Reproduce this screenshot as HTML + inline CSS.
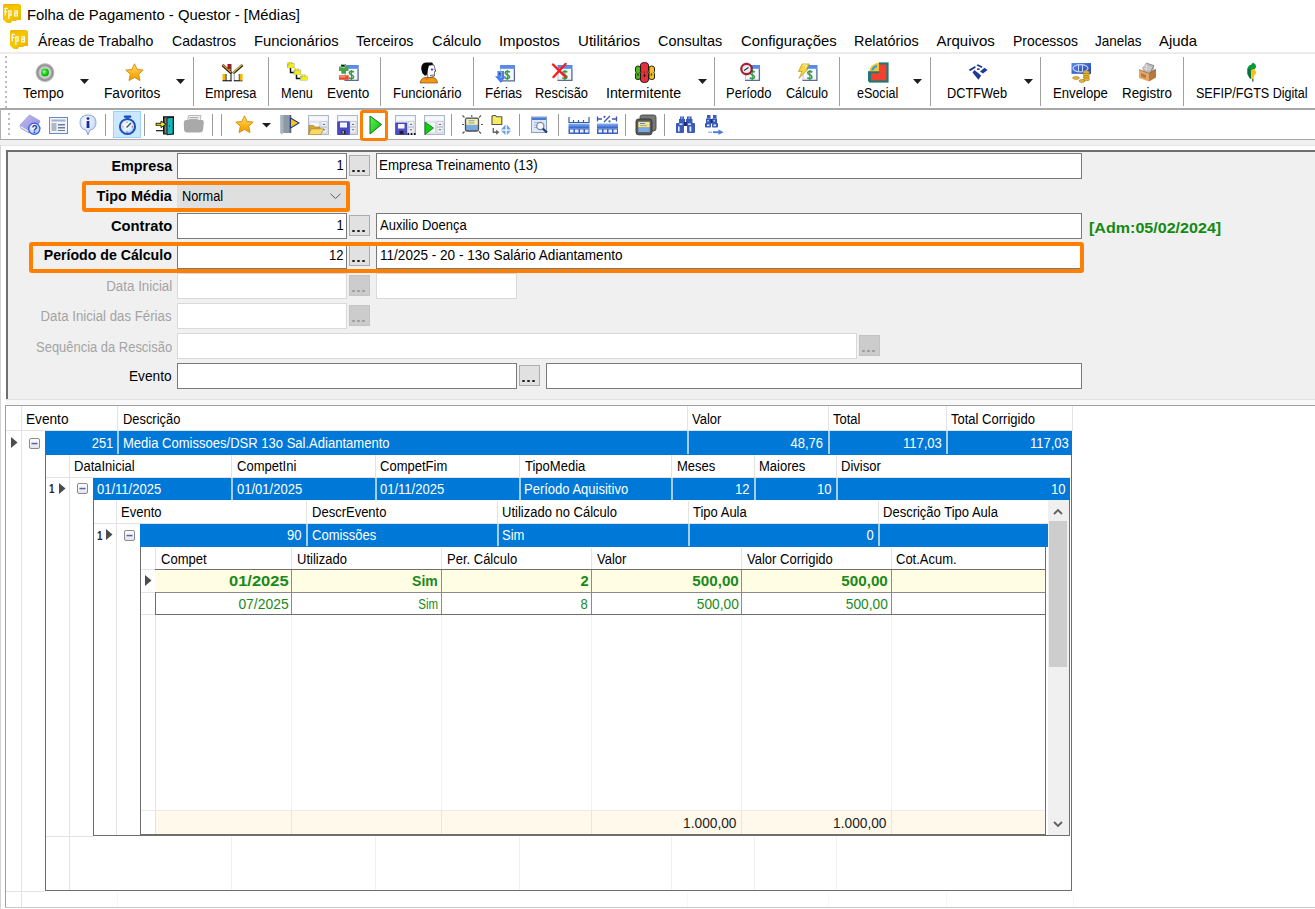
<!DOCTYPE html><html><head><meta charset="utf-8"><style>
html,body{margin:0;padding:0}
body{width:1315px;height:909px;overflow:hidden;position:relative;background:#fff;font-family:"Liberation Sans",sans-serif}
body>div{position:absolute}
.t{white-space:nowrap;line-height:1}
</style></head><body>

<svg style="position:absolute;left:0px;top:0px" width="24" height="24" viewBox="0 0 24 24"><defs><linearGradient id="fg0" x1="0" y1="0" x2="1" y2="1"><stop offset="0" stop-color="#f2b800"/><stop offset="0.5" stop-color="#f4c800"/><stop offset="1" stop-color="#eab000"/></linearGradient></defs><path d="M4 4 L18 4 L21 5 L21 20 L17 20 L16 21 L12 21 L11 23 L7 23 L3 19.5 L3 5Z" fill="url(#fg0)"/><path d="M4 4 L18 4 L21 5 L5 5.5Z" fill="#f0a800" opacity="0.6"/><g fill="#fff8e0"><rect x="4.6" y="7.8" width="1.4" height="7.7"/><rect x="4.6" y="7.8" width="3.4" height="1.3"/><rect x="4.6" y="11" width="2.8" height="1.2"/><rect x="8.2" y="10.2" width="1.3" height="8.8"/></g><path d="M8.8 10.8 L11 10.8 L11 15.2 L8.8 15.2 M14.2 10.8 L17.4 10.8 L17.4 15.8 L14.7 15.8 L14.7 13 L17.4 13" stroke="#fff8e0" stroke-width="1.3" fill="none"/></svg>
<div class="t" style="left:27.00px;top:6.90px;font-size:15px;color:#000;transform:scaleX(0.9890);transform-origin:left top;">Folha de Pagamento - Questor - [Médias]</div>
<svg style="position:absolute;left:7px;top:26px" width="24" height="24" viewBox="0 0 24 24"><defs><linearGradient id="fg7" x1="0" y1="0" x2="1" y2="1"><stop offset="0" stop-color="#f2b800"/><stop offset="0.5" stop-color="#f4c800"/><stop offset="1" stop-color="#eab000"/></linearGradient></defs><path d="M4 4 L18 4 L21 5 L21 20 L17 20 L16 21 L12 21 L11 23 L7 23 L3 19.5 L3 5Z" fill="url(#fg7)"/><path d="M4 4 L18 4 L21 5 L5 5.5Z" fill="#f0a800" opacity="0.6"/><g fill="#fff8e0"><rect x="4.6" y="7.8" width="1.4" height="7.7"/><rect x="4.6" y="7.8" width="3.4" height="1.3"/><rect x="4.6" y="11" width="2.8" height="1.2"/><rect x="8.2" y="10.2" width="1.3" height="8.8"/></g><path d="M8.8 10.8 L11 10.8 L11 15.2 L8.8 15.2 M14.2 10.8 L17.4 10.8 L17.4 15.8 L14.7 15.8 L14.7 13 L17.4 13" stroke="#fff8e0" stroke-width="1.3" fill="none"/></svg>
<div class="t" style="left:37.60px;top:33.30px;font-size:15px;color:#000;transform:scaleX(0.9413);transform-origin:left top;">Áreas de Trabalho</div>
<div class="t" style="left:171.90px;top:33.30px;font-size:15px;color:#000;transform:scaleX(0.9360);transform-origin:left top;">Cadastros</div>
<div class="t" style="left:254.00px;top:33.30px;font-size:15px;color:#000;transform:scaleX(0.9852);transform-origin:left top;">Funcionários</div>
<div class="t" style="left:356.20px;top:33.30px;font-size:15px;color:#000;transform:scaleX(0.9432);transform-origin:left top;">Terceiros</div>
<div class="t" style="left:431.70px;top:33.30px;font-size:15px;color:#000;transform:scaleX(0.9817);transform-origin:left top;">Cálculo</div>
<div class="t" style="left:498.90px;top:33.30px;font-size:15px;color:#000;">Impostos</div>
<div class="t" style="left:578.00px;top:33.30px;font-size:15px;color:#000;transform:scaleX(1.0053);transform-origin:left top;">Utilitários</div>
<div class="t" style="left:658.30px;top:33.30px;font-size:15px;color:#000;transform:scaleX(0.9610);transform-origin:left top;">Consultas</div>
<div class="t" style="left:740.50px;top:33.30px;font-size:15px;color:#000;transform:scaleX(0.9883);transform-origin:left top;">Configurações</div>
<div class="t" style="left:854.20px;top:33.30px;font-size:15px;color:#000;transform:scaleX(0.9581);transform-origin:left top;">Relatórios</div>
<div class="t" style="left:936.50px;top:33.30px;font-size:15px;color:#000;">Arquivos</div>
<div class="t" style="left:1012.60px;top:33.30px;font-size:15px;color:#000;transform:scaleX(0.9282);transform-origin:left top;">Processos</div>
<div class="t" style="left:1094.60px;top:33.30px;font-size:15px;color:#000;transform:scaleX(0.8974);transform-origin:left top;">Janelas</div>
<div class="t" style="left:1158.90px;top:33.30px;font-size:15px;color:#000;transform:scaleX(0.9932);transform-origin:left top;">Ajuda</div>
<div style="left:0px;top:52px;width:1315px;height:2px;background:#ececec;"></div>
<div style="left:5px;top:56px;width:2px;height:2px;background:#bdbdbd;"></div>
<div style="left:5px;top:61px;width:2px;height:2px;background:#bdbdbd;"></div>
<div style="left:5px;top:66px;width:2px;height:2px;background:#bdbdbd;"></div>
<div style="left:5px;top:71px;width:2px;height:2px;background:#bdbdbd;"></div>
<div style="left:5px;top:76px;width:2px;height:2px;background:#bdbdbd;"></div>
<div style="left:5px;top:81px;width:2px;height:2px;background:#bdbdbd;"></div>
<div style="left:5px;top:86px;width:2px;height:2px;background:#bdbdbd;"></div>
<div style="left:5px;top:91px;width:2px;height:2px;background:#bdbdbd;"></div>
<div style="left:5px;top:96px;width:2px;height:2px;background:#bdbdbd;"></div>
<div style="left:5px;top:101px;width:2px;height:2px;background:#bdbdbd;"></div>
<div style="left:5px;top:106px;width:2px;height:2px;background:#bdbdbd;"></div>
<div class="t" style="left:23.10px;top:85.95px;font-size:14px;color:#000;transform:scaleX(0.9690);transform-origin:left top;">Tempo</div>
<div class="t" style="left:104.00px;top:85.95px;font-size:14px;color:#000;transform:scaleX(0.9783);transform-origin:left top;">Favoritos</div>
<div class="t" style="left:205.20px;top:85.95px;font-size:14px;color:#000;transform:scaleX(0.9161);transform-origin:left top;">Empresa</div>
<div class="t" style="left:280.50px;top:85.95px;font-size:14px;color:#000;transform:scaleX(0.9114);transform-origin:left top;">Menu</div>
<div class="t" style="left:326.60px;top:85.95px;font-size:14px;color:#000;transform:scaleX(0.9684);transform-origin:left top;">Evento</div>
<div class="t" style="left:393.00px;top:85.95px;font-size:14px;color:#000;transform:scaleX(0.9356);transform-origin:left top;">Funcionário</div>
<div class="t" style="left:484.70px;top:85.95px;font-size:14px;color:#000;transform:scaleX(0.9518);transform-origin:left top;">Férias</div>
<div class="t" style="left:535.00px;top:85.95px;font-size:14px;color:#000;transform:scaleX(0.9207);transform-origin:left top;">Rescisão</div>
<div class="t" style="left:606.00px;top:85.95px;font-size:14px;color:#000;transform:scaleX(1.0150);transform-origin:left top;">Intermitente</div>
<div class="t" style="left:726.00px;top:85.95px;font-size:14px;color:#000;transform:scaleX(0.9283);transform-origin:left top;">Período</div>
<div class="t" style="left:785.50px;top:85.95px;font-size:14px;color:#000;transform:scaleX(0.9020);transform-origin:left top;">Cálculo</div>
<div class="t" style="left:856.80px;top:85.95px;font-size:14px;color:#000;transform:scaleX(0.8975);transform-origin:left top;">eSocial</div>
<div class="t" style="left:947.30px;top:85.95px;font-size:14px;color:#000;transform:scaleX(0.9112);transform-origin:left top;">DCTFWeb</div>
<div class="t" style="left:1052.80px;top:85.95px;font-size:14px;color:#000;transform:scaleX(0.9390);transform-origin:left top;">Envelope</div>
<div class="t" style="left:1121.50px;top:85.95px;font-size:14px;color:#000;transform:scaleX(0.9557);transform-origin:left top;">Registro</div>
<div class="t" style="left:1195.80px;top:85.95px;font-size:14px;color:#000;transform:scaleX(0.8966);transform-origin:left top;">SEFIP/FGTS Digital</div>
<div style="left:193px;top:57px;width:1px;height:49px;background:#a0a0a0;"></div>
<div style="left:268px;top:57px;width:1px;height:49px;background:#a0a0a0;"></div>
<div style="left:380px;top:57px;width:1px;height:49px;background:#a0a0a0;"></div>
<div style="left:473px;top:57px;width:1px;height:49px;background:#a0a0a0;"></div>
<div style="left:714px;top:57px;width:1px;height:49px;background:#a0a0a0;"></div>
<div style="left:839px;top:57px;width:1px;height:49px;background:#a0a0a0;"></div>
<div style="left:930px;top:57px;width:1px;height:49px;background:#a0a0a0;"></div>
<div style="left:1040px;top:57px;width:1px;height:49px;background:#a0a0a0;"></div>
<div style="left:1183px;top:57px;width:1px;height:49px;background:#a0a0a0;"></div>
<svg style="position:absolute;left:80px;top:79px" width="9" height="5" viewBox="0 0 9 5"><path d="M0 0 L9 0 L4.5 5Z" fill="#1e1e1e"/></svg>
<svg style="position:absolute;left:176px;top:79px" width="9" height="5" viewBox="0 0 9 5"><path d="M0 0 L9 0 L4.5 5Z" fill="#1e1e1e"/></svg>
<svg style="position:absolute;left:698px;top:79px" width="9" height="5" viewBox="0 0 9 5"><path d="M0 0 L9 0 L4.5 5Z" fill="#1e1e1e"/></svg>
<svg style="position:absolute;left:913px;top:79px" width="9" height="5" viewBox="0 0 9 5"><path d="M0 0 L9 0 L4.5 5Z" fill="#1e1e1e"/></svg>
<svg style="position:absolute;left:1024px;top:79px" width="9" height="5" viewBox="0 0 9 5"><path d="M0 0 L9 0 L4.5 5Z" fill="#1e1e1e"/></svg>
<div style="left:0px;top:108px;width:1315px;height:2px;background:#a7a7a7;"></div>
<svg style="position:absolute;left:35px;top:63px" width="20" height="20" viewBox="0 0 20 20"><defs><radialGradient id="tg"><stop offset="0.3" stop-color="#f0f0f0"/><stop offset="0.55" stop-color="#c8c8c8"/><stop offset="0.78" stop-color="#8c8c8c"/><stop offset="0.92" stop-color="#c4c4c4"/><stop offset="1" stop-color="#f8f8f8"/></radialGradient><radialGradient id="tg2" cx="0.4" cy="0.4"><stop offset="0" stop-color="#b0ffb0"/><stop offset="0.5" stop-color="#30e030"/><stop offset="1" stop-color="#10b010"/></radialGradient></defs><circle cx="10" cy="9.6" r="9.8" fill="url(#tg)"/><circle cx="10" cy="9.6" r="4" fill="url(#tg2)"/></svg>
<svg style="position:absolute;left:125px;top:63px" width="19" height="19" viewBox="0 0 19 19"><defs><linearGradient id="sg" x1="0" y1="0" x2="0" y2="1"><stop offset="0" stop-color="#ffe27a"/><stop offset="0.6" stop-color="#f9b21a"/><stop offset="1" stop-color="#f39a00"/></linearGradient></defs><path transform="scale(1.000)" d="M9.5 0.8 L12.1 6.4 L18.2 7.1 L13.7 11.2 L15 17.6 L9.5 14.5 L4 17.6 L5.3 11.2 L0.8 7.1 L6.9 6.4Z" fill="url(#sg)" stroke="#d48a00" stroke-width="0.9" stroke-linejoin="round"/></svg>
<svg style="position:absolute;left:218px;top:60px" width="30" height="25" viewBox="0 0 30 25"><path d="M4.5 5 L13.5 13.2" stroke="#111" stroke-width="2.8"/><path d="M4.5 4.6 L13.2 12.6" stroke="#d8a820" stroke-width="1.3"/><path d="M24.5 5 L15 13.4" stroke="#111" stroke-width="2.6"/><path d="M24.3 4.6 L14.8 12.9" stroke="#e0b840" stroke-width="1.3"/><rect x="9.5" y="4" width="3" height="5" fill="#d00018"/><rect x="12.4" y="4" width="1" height="7" fill="#111"/><rect x="4.5" y="14" width="3.2" height="6.5" fill="#f4b800"/><rect x="7.6" y="14" width="0.9" height="7" fill="#111"/><rect x="4.5" y="20.2" width="9" height="1.1" fill="#111"/><rect x="12.5" y="13" width="1" height="8.3" fill="#111"/><rect x="15.8" y="13" width="0.9" height="8" fill="#8aa0a0"/><rect x="15.8" y="20.2" width="8.7" height="1.1" fill="#111"/><rect x="21.4" y="14" width="3.2" height="6.5" fill="#f4b800"/><rect x="20.8" y="14" width="0.7" height="7" fill="#111"/></svg>
<svg style="position:absolute;left:284px;top:60px" width="28" height="24" viewBox="0 0 28 24"><path d="M6.5 8 L6.5 12.5 L10 12.5 M12.5 14.5 L12.5 18.5 L16.5 18.5" stroke="#111" stroke-width="1.5" fill="none"/><path d="M3 4.5 L4 2 L5.5 2 L6 3 L7 2 L8 2 L8.5 3.2 L10.5 3.2 L10.5 8 L3 8Z" fill="#a8a8b0"/><path d="M3.2 8 L5 4.2 L10 3.8 L10 7.6Z" fill="#f2f200"/><path d="M9.5 11.0 L10.5 8.5 L12.0 8.5 L12.5 9.5 L13.5 8.5 L14.5 8.5 L15.0 9.7 L17.0 9.7 L17.0 14.5 L9.5 14.5Z" fill="#a8a8b0"/><path d="M9.7 14.5 L11.5 10.7 L16.5 10.3 L16.5 14.1Z" fill="#f2f200"/><path d="M16 17.0 L17 14.5 L18.5 14.5 L19 15.5 L20 14.5 L21 14.5 L21.5 15.7 L23.5 15.7 L23.5 20.5 L16 20.5Z" fill="#a8a8b0"/><path d="M16.2 20.5 L18 16.7 L23 16.3 L23 20.1Z" fill="#f2f200"/><circle cx="4" cy="3" r="1" fill="#f0f000"/><circle cx="6.5" cy="3" r="1" fill="#f0f000"/><circle cx="10.5" cy="9.5" r="1" fill="#f0f000"/><circle cx="13" cy="9.5" r="1" fill="#f0f000"/><circle cx="17" cy="15.5" r="1" fill="#f0f000"/><circle cx="19.5" cy="15.5" r="1" fill="#f0f000"/></svg>
<svg style="position:absolute;left:336px;top:60px" width="26" height="24" viewBox="0 0 26 24"><rect x="8.5" y="5" width="14.2" height="16" fill="#f4f7fc"/><rect x="8.5" y="5" width="14.2" height="3.8" fill="#5a8ae6"/><path d="M22.099999999999998 8.8 L22.099999999999998 20.4 L8.5 20.4" stroke="#5a6a92" stroke-width="1.3" fill="none"/><path d="M9.0 8.8 L9.0 20" stroke="#b8c8e4" stroke-width="1" fill="none"/><g transform="translate(12.399999999999999,10) scale(0.95)"><path d="M5.6 2.4 C5 1.2 1.2 0.9 1 3 C0.8 5 5.6 4.8 5.5 7.3 C5.4 9.6 1.3 9.4 0.6 8.1" stroke="#3a9a4a" stroke-width="1.7" fill="none"/><path d="M3.2 0 L3.2 10.5" stroke="#3a9a4a" stroke-width="1.1"/></g><path d="M5.3 4 L10 4 L10 6.5 L12.5 6.5 L12.5 11 L10 11 L10 13.7 L5.3 13.7 L5.3 11 L3 11 L3 6.5 L5.3 6.5Z" fill="#4aa04a"/><path d="M5.3 4.5 L9 4.5 L9 7.5 L5.3 7.5 M3.5 7 L8 7" stroke="#8ad08a" stroke-width="1"/><rect x="3" y="15.3" width="9.7" height="4.5" fill="#e84a2a"/><rect x="3.5" y="16" width="6" height="1.5" fill="#ff8a7a"/></svg>
<svg style="position:absolute;left:416px;top:60px" width="26" height="26" viewBox="0 0 26 26"><path d="M4 23 Q5 18 9 17.5 L17 17.5 Q21 18 21.5 23Z" fill="#f59a10" stroke="#5a3a10" stroke-width="0.6"/><path d="M9 17.5 L12 19.5 L10 20Z" fill="#ff5a00"/><path d="M10 5 L18 5 L19.5 10.5 L18.5 12 L18.5 16 L16 17 L12 18 Z" fill="#fbfbfb" stroke="#222" stroke-width="0.6"/><path d="M5.2 9 Q5 3 10 2.5 L16 2.5 L17.5 4.5 L13 5.5 L12 9 L11.5 12 L10.5 15.5 L8.5 15.5 Q5.5 13 5.2 9Z" fill="#080808"/><ellipse cx="16" cy="9.5" rx="1.3" ry="1" fill="#3a3ae8"/><path d="M18.5 9.5 L19.8 10.8 L18.6 11.5" stroke="#222" stroke-width="0.8" fill="none"/><path d="M14 15.5 L18 15" stroke="#444" stroke-width="0.8"/></svg>
<svg style="position:absolute;left:492px;top:60px" width="26" height="26" viewBox="0 0 26 26"><rect x="8" y="5" width="15" height="16.5" fill="#f4f7fc"/><rect x="8" y="5" width="15" height="3.8" fill="#5a8ae6"/><path d="M22.4 8.8 L22.4 20.9 L8 20.9" stroke="#5a6a92" stroke-width="1.3" fill="none"/><path d="M8.5 8.8 L8.5 20.5" stroke="#b8c8e4" stroke-width="1" fill="none"/><g transform="translate(12.3,10) scale(0.95)"><path d="M5.6 2.4 C5 1.2 1.2 0.9 1 3 C0.8 5 5.6 4.8 5.5 7.3 C5.4 9.6 1.3 9.4 0.6 8.1" stroke="#3a9a4a" stroke-width="1.7" fill="none"/><path d="M3.2 0 L3.2 10.5" stroke="#3a9a4a" stroke-width="1.1"/></g><path d="M5.5 11 L12 11 L12 16.2 L14 16.2 L8.8 23 L3 16.2 L5.5 16.2Z" fill="#4a7ee8"/><path d="M7 12 L9 12 L9 18" stroke="#9ac0ff" stroke-width="1.2"/></svg>
<svg style="position:absolute;left:549px;top:60px" width="26" height="26" viewBox="0 0 26 26"><rect x="8.5" y="5" width="15" height="16" fill="#f4f7fc"/><rect x="8.5" y="5" width="15" height="3.8" fill="#5a8ae6"/><path d="M22.9 8.8 L22.9 20.4 L8.5 20.4" stroke="#5a6a92" stroke-width="1.3" fill="none"/><path d="M9.0 8.8 L9.0 20" stroke="#b8c8e4" stroke-width="1" fill="none"/><g transform="translate(12.8,10) scale(0.95)"><path d="M5.6 2.4 C5 1.2 1.2 0.9 1 3 C0.8 5 5.6 4.8 5.5 7.3 C5.4 9.6 1.3 9.4 0.6 8.1" stroke="#3a9a4a" stroke-width="1.7" fill="none"/><path d="M3.2 0 L3.2 10.5" stroke="#3a9a4a" stroke-width="1.1"/></g><path d="M4 4.5 L16.5 17 M16.5 4 L4.5 17" stroke="#ff1a1a" stroke-width="2.4" stroke-linecap="round"/></svg>
<svg style="position:absolute;left:631px;top:60px" width="26" height="26" viewBox="0 0 26 26"><path d="M4.5 8 Q4.5 6 7 6 Q9.5 6 9.5 8 L9.5 11.5 Q8.5 12.5 9.5 13.5 L9.5 18 Q9.5 19.5 7 19.5 Q4.5 19.5 4.5 18 L4.5 13.5 Q5.5 12.5 4.5 11.5Z" fill="#4ab81a" stroke="#111" stroke-width="0.9"/><path d="M18 8 Q18 6 20.5 6 Q23.5 6 23.5 8 L23.5 11.5 Q22.5 12.5 23.5 13.5 L23.5 18 Q23.5 19.5 20.5 19.5 Q18 19.5 18 18 L18 13.5 Q19 12.5 18 11.5Z" fill="#f0c020" stroke="#111" stroke-width="0.9"/><path d="M9.5 5 Q9.5 2.5 13.5 2.5 Q17.5 2.5 17.5 5 L17.5 10.5 Q16.5 12 17.5 13.5 L17.5 20 Q17.5 22.5 13.5 22.5 Q9.5 22.5 9.5 20 L9.5 13.5 Q10.5 12 9.5 10.5Z" fill="#e8303a" stroke="#111" stroke-width="0.9"/><ellipse cx="13.5" cy="15.5" rx="0.9" ry="1.6" fill="#111"/><ellipse cx="13.5" cy="12" rx="0.6" ry="0.6" fill="#111"/><ellipse cx="7" cy="14.5" rx="0.8" ry="1.2" fill="#173a0a"/><ellipse cx="20.5" cy="14.5" rx="0.8" ry="1.2" fill="#5a4010"/></svg>
<svg style="position:absolute;left:737px;top:59px" width="26" height="26" viewBox="0 0 26 26"><rect x="8" y="6" width="15" height="16" fill="#f4f7fc"/><rect x="8" y="6" width="15" height="3.8" fill="#5a8ae6"/><path d="M22.4 9.8 L22.4 21.4 L8 21.4" stroke="#5a6a92" stroke-width="1.3" fill="none"/><path d="M8.5 9.8 L8.5 21" stroke="#b8c8e4" stroke-width="1" fill="none"/><g transform="translate(12.3,11) scale(0.95)"><path d="M5.6 2.4 C5 1.2 1.2 0.9 1 3 C0.8 5 5.6 4.8 5.5 7.3 C5.4 9.6 1.3 9.4 0.6 8.1" stroke="#3a9a4a" stroke-width="1.7" fill="none"/><path d="M3.2 0 L3.2 10.5" stroke="#3a9a4a" stroke-width="1.1"/></g><circle cx="9.5" cy="10" r="5" fill="#e6ecfa" stroke="#c01828" stroke-width="1.8"/><circle cx="9.5" cy="10" r="6" fill="none" stroke="#300" stroke-width="0.5"/><path d="M7 11.5 L11.5 8.5" stroke="#333" stroke-width="1.1"/></svg>
<svg style="position:absolute;left:794px;top:59px" width="26" height="26" viewBox="0 0 26 26"><rect x="8.5" y="6" width="15" height="16" fill="#f4f7fc"/><rect x="8.5" y="6" width="15" height="3.8" fill="#5a8ae6"/><path d="M22.9 9.8 L22.9 21.4 L8.5 21.4" stroke="#5a6a92" stroke-width="1.3" fill="none"/><path d="M9.0 9.8 L9.0 21" stroke="#b8c8e4" stroke-width="1" fill="none"/><g transform="translate(12.8,11) scale(0.95)"><path d="M5.6 2.4 C5 1.2 1.2 0.9 1 3 C0.8 5 5.6 4.8 5.5 7.3 C5.4 9.6 1.3 9.4 0.6 8.1" stroke="#3a9a4a" stroke-width="1.7" fill="none"/><path d="M3.2 0 L3.2 10.5" stroke="#3a9a4a" stroke-width="1.1"/></g><path d="M8 5 L15.5 5 L12.5 10 L14 10 L5 19.5 L8 12.5 L4.5 12.5Z" fill="#f6d640" stroke="#c09010" stroke-width="0.7"/><path d="M8.5 6 L13 6 L10.5 10" stroke="#fff8b0" stroke-width="0.9" fill="none"/></svg>
<svg style="position:absolute;left:865px;top:59px" width="26" height="26" viewBox="0 0 26 26"><rect x="5" y="4.5" width="17.5" height="18" fill="#f2402e" stroke="#1f7878" stroke-width="2.2"/><path d="M3.5 3 L14 3 L14 13.5 L3.5 13.5Z" fill="#fff"/><path d="M14 3.5 L14 13.2 L4 13.2 Q5 5 14 3.5Z" fill="#f6c628"/><path d="M12 6 Q7 7 6.3 11.2 L8.5 11.2 Q9.5 8.5 12 8Z" fill="#2aa0ee"/><path d="M14 13.2 L4 13.2 L4 22.5" stroke="#1f7878" stroke-width="2" fill="none"/></svg>
<svg style="position:absolute;left:965px;top:59px" width="26" height="26" viewBox="0 0 26 26"><path d="M11.5 6.5 L12.8 5.2 L17.5 7.6 L16.6 8.9Z" fill="#1e3a98"/><path d="M4 10.6 L10 7 L10.9 8.6 L5 12.2Z" fill="#1e3a98"/><rect x="12" y="9.4" width="2.6" height="1.6" fill="#1e3a98"/><path d="M15 12.6 L19.5 8.8 L22.6 10.9 L18 14.6Z" fill="#1e3a98"/><path d="M7.5 13.6 L9.4 11 L16.2 16.4 L13.4 20.8Z" fill="#1e3a98"/></svg>
<svg style="position:absolute;left:1068px;top:59px" width="26" height="26" viewBox="0 0 26 26"><defs><linearGradient id="bn" x1="0" y1="0" x2="1" y2="1"><stop offset="0" stop-color="#5a8ae8"/><stop offset="1" stop-color="#2040b0"/></linearGradient></defs><rect x="3.5" y="4" width="19.5" height="10.8" fill="url(#bn)"/><ellipse cx="12.5" cy="9.3" rx="7.5" ry="3.6" fill="none" stroke="#d8e4ff" stroke-width="1.2" opacity="0.85"/><path d="M10.5 5.8 L10.5 12.5 M14.5 5.8 L14.5 12" stroke="#c8d8ff" stroke-width="1"/><g fill="#e8b838" stroke="#8a6010" stroke-width="0.5"><ellipse cx="18.3" cy="13.2" rx="3.2" ry="1.5"/><ellipse cx="18.3" cy="15.6" rx="3.2" ry="1.4"/><ellipse cx="18.3" cy="18" rx="3.2" ry="1.4"/><ellipse cx="18.5" cy="20.3" rx="3.2" ry="1.4"/><ellipse cx="8" cy="19" rx="3.4" ry="1.4"/><ellipse cx="14" cy="22" rx="3" ry="1.4"/></g></svg>
<svg style="position:absolute;left:1135px;top:59px" width="26" height="26" viewBox="0 0 26 26"><path d="M7 9 L11 4 L19 6.5 L18.5 14 L9 14Z" fill="#b8b8b8"/><path d="M9 6.5 L17 9 M8.5 9 L16 11 M12 4.5 L11 12" stroke="#e8e8e8" stroke-width="0.8"/><path d="M11 4 L19 6.5 L15 14" stroke="#777" stroke-width="0.7" fill="none"/><path d="M4 10.5 L14 14.5 L14 22.5 L4 19Z" fill="#e4a864"/><path d="M14 14.5 L21 10 L21 18.5 L14 22.5Z" fill="#b8783c"/><path d="M4 10.5 L14 14.5 L21 10" stroke="#8a5020" stroke-width="0.6" fill="none"/><path d="M6 14 L11 16 L11 19.5 L6 17.5Z" fill="#b87a40"/></svg>
<svg style="position:absolute;left:1239px;top:59px" width="26" height="26" viewBox="0 0 26 26"><path d="M14 3.5 L16.5 5.5 L17.2 8 L15.8 10 L12.5 11 L12 15.5 L12.5 19.5 L11 19.5 L8.5 15 L8.5 9 L10 6.5 L12 5.8Z" fill="#0a9a3a"/><path d="M8.5 9.5 L11.5 10.5 L12.2 19.5 L10.8 19.5 L8.5 15Z" fill="#0a6a4a"/><path d="M15.5 10 L16.5 12 L17.3 13.2 L16.5 15 L15 16.5 L14.5 20 L13 20 L12 15 L12.5 11Z" fill="#fcc200"/><rect x="13" y="20" width="1.6" height="2.6" fill="#3a8a6a"/></svg>
<div style="left:0px;top:109px;width:1px;height:31px;background:#b0b0b0;"></div>
<div style="left:8px;top:113px;width:2px;height:2px;background:#bdbdbd;"></div>
<div style="left:8px;top:118px;width:2px;height:2px;background:#bdbdbd;"></div>
<div style="left:8px;top:123px;width:2px;height:2px;background:#bdbdbd;"></div>
<div style="left:8px;top:128px;width:2px;height:2px;background:#bdbdbd;"></div>
<div style="left:8px;top:133px;width:2px;height:2px;background:#bdbdbd;"></div>
<div style="left:105px;top:114px;width:1px;height:22px;background:#9a9a9a;"></div>
<div style="left:144px;top:114px;width:1px;height:22px;background:#9a9a9a;"></div>
<div style="left:212px;top:114px;width:1px;height:22px;background:#9a9a9a;"></div>
<div style="left:221px;top:114px;width:1px;height:22px;background:#9a9a9a;"></div>
<div style="left:451px;top:114px;width:1px;height:22px;background:#9a9a9a;"></div>
<div style="left:519px;top:114px;width:1px;height:22px;background:#9a9a9a;"></div>
<div style="left:558px;top:114px;width:1px;height:22px;background:#9a9a9a;"></div>
<div style="left:625px;top:114px;width:1px;height:22px;background:#9a9a9a;"></div>
<div style="left:664px;top:114px;width:1px;height:22px;background:#9a9a9a;"></div>
<div style="left:0px;top:139px;width:1315px;height:1px;background:#a7a7a7;"></div>
<div style="left:0px;top:140px;width:1315px;height:5px;background:#f0f0f0;"></div>
<div style="left:0px;top:145px;width:1315px;height:1px;background:#e6e6e6;"></div>
<svg style="position:absolute;left:16px;top:111px" width="30" height="28" viewBox="0 0 30 28"><defs><linearGradient id="bk" x1="0" y1="0" x2="1" y2="1"><stop offset="0" stop-color="#c4c0f0"/><stop offset="1" stop-color="#8882d8"/></linearGradient><radialGradient id="qc" cx="0.4" cy="0.35"><stop offset="0" stop-color="#ffffff"/><stop offset="1" stop-color="#b8d0ff"/></radialGradient></defs><path d="M4 14 L13.5 4 L24 10 L23 12.5 L13 22 L4.5 17Z" fill="url(#bk)" stroke="#9a94dc" stroke-width="0.8"/><path d="M4.5 15.5 L12.5 20.5" stroke="#e8f0e0" stroke-width="1.4"/><circle cx="18.3" cy="17.8" r="5.6" fill="url(#qc)" stroke="#3060e0" stroke-width="1.3"/><text x="15.4" y="21.6" font-family="Liberation Sans" font-weight="bold" font-size="10" fill="#2a3a90">?</text></svg>
<svg style="position:absolute;left:49px;top:117px" width="19" height="17" viewBox="0 0 19 17"><rect x="0.5" y="0.5" width="18" height="16" fill="#f0f4fa" stroke="#6a8ac0" stroke-width="1"/><rect x="2.5" y="2.5" width="14" height="2" fill="#a0b0c8"/><rect x="2.5" y="6" width="5" height="8" fill="#b0b8c4"/><rect x="9" y="7" width="7" height="1.5" fill="#6a7aa0"/><rect x="9" y="10" width="7" height="1.5" fill="#6a7aa0"/><rect x="9" y="13" width="7" height="1" fill="#6a7aa0"/></svg>
<svg style="position:absolute;left:79px;top:114px" width="18" height="22" viewBox="0 0 18 22"><defs><radialGradient id="ib" cx="0.4" cy="0.35" r="0.7"><stop offset="0" stop-color="#ffffff"/><stop offset="1" stop-color="#b8d0f0"/></radialGradient></defs><path d="M9 1 Q17 1 17 8.5 Q17 15 11 16 L9 21 L7 16 Q1 15 1 8.5 Q1 1 9 1Z" fill="url(#ib)" stroke="#8aa8d8" stroke-width="1"/><circle cx="9" cy="4.6" r="1.4" fill="#1a2aa0"/><rect x="7.6" y="7" width="2.8" height="7" fill="#1a2aa0"/></svg>
<div style="left:113px;top:111px;width:28px;height:27px;background:#cce8ff;box-sizing:border-box;border:1px solid #99d1ff;"></div>
<svg style="position:absolute;left:110px;top:109px" width="100" height="30" viewBox="0 0 100 30"><defs><radialGradient id="sw" cx="0.45" cy="0.45"><stop offset="0" stop-color="#ffffff"/><stop offset="0.7" stop-color="#d8ecfc"/><stop offset="1" stop-color="#9ac8f0"/></radialGradient></defs><rect x="13.8" y="6.4" width="7.6" height="2.4" rx="1" fill="#1a4ab8"/><rect x="16.3" y="8.4" width="2.6" height="2" fill="#1a4ab8"/><circle cx="17.5" cy="17.5" r="7.6" fill="url(#sw)" stroke="#1a50c0" stroke-width="2"/><path d="M16.5 18.5 L21 14" stroke="#3a5a6a" stroke-width="1.5"/><circle cx="17" cy="13.2" r="0.8" fill="#f08a50"/><circle cx="12.8" cy="17.8" r="0.8" fill="#f08a50"/><circle cx="22.3" cy="17.8" r="0.8" fill="#e84a30"/><circle cx="17" cy="23" r="0.8" fill="#e84a30"/><path d="M53 7.2 L64 7.2 L64 25.5 L53 25.5Z" fill="#111"/><rect x="54.5" y="8.5" width="4" height="16" fill="#7a7a7a"/><path d="M57 9 L63.2 8.2 L63.2 25 L57 25.8Z" fill="#10b8c0" stroke="#111" stroke-width="0.9"/><rect x="59" y="16.5" width="0.9" height="1.2" fill="#111"/><path d="M46 14.3 L51 14.3 L51 12 L56 15.3 L51 18.6 L51 16.3 L46 16.3Z" fill="#f4f000" stroke="#111" stroke-width="0.9"/><path d="M46 21.7 L53 21.7" stroke="#111" stroke-width="1.2"/><path d="M78.5 6.5 L91 6.5 L90 12.5 L77.5 12.5Z" fill="#f0f0f0" stroke="#a8a8a8" stroke-width="0.8"/><path d="M79.5 8.7 L88.5 8.7 M79 10.7 L88 10.7" stroke="#999" stroke-width="0.9"/><path d="M76 11 L92 11 Q94 11 93.8 14 L93 21 Q92.5 23.5 90 23.5 L77 23.5 Q74.5 23.5 74 21 L73.8 14 Q74 11 76 11Z" fill="#a9a9a9"/></svg>
<svg style="position:absolute;left:235px;top:115px" width="19" height="19" viewBox="0 0 19 19"><defs><linearGradient id="sg" x1="0" y1="0" x2="0" y2="1"><stop offset="0" stop-color="#ffe27a"/><stop offset="0.6" stop-color="#f9b21a"/><stop offset="1" stop-color="#f39a00"/></linearGradient></defs><path transform="scale(1.000)" d="M9.5 0.8 L12.1 6.4 L18.2 7.1 L13.7 11.2 L15 17.6 L9.5 14.5 L4 17.6 L5.3 11.2 L0.8 7.1 L6.9 6.4Z" fill="url(#sg)" stroke="#d48a00" stroke-width="0.9" stroke-linejoin="round"/></svg>
<svg style="position:absolute;left:262px;top:123px" width="9" height="4.5" viewBox="0 0 9 4.5"><path d="M0 0 L9 0 L4.5 4.5Z" fill="#1e1e1e"/></svg>
<svg style="position:absolute;left:279px;top:114px" width="22" height="22" viewBox="0 0 22 22"><path d="M1.5 1 L12 1 L12 19 L3 19 L4 21 L1.5 19Z" fill="#8c9aa6"/><rect x="1.5" y="1" width="3" height="18" fill="#a8b4be"/><rect x="10.5" y="1" width="1.8" height="18" fill="#5a6874"/><path d="M11.5 4 L20 9 L11.5 14Z" fill="#f8c818" stroke="#2a3a78" stroke-width="1.1" stroke-linejoin="round"/></svg>
<svg style="position:absolute;left:308px;top:115px" width="21" height="20" viewBox="0 0 21 20"><rect x="0.5" y="0.5" width="20" height="19" fill="#e6ebf3" stroke="#aeb8c8" stroke-width="1"/><rect x="1.5" y="1.5" width="18" height="4" fill="#f6f8fc"/><rect x="2" y="7" width="9.5" height="11" fill="#f4f6fa" stroke="#c4ccd8" stroke-width="0.6"/><rect x="13" y="6.5" width="6" height="5" fill="#f0f2f6" stroke="#b4bccb" stroke-width="0.6"/><rect x="13" y="12.5" width="6" height="5.5" fill="#f0f2f6" stroke="#b4bccb" stroke-width="0.6"/><path d="M14.5 10 L16 8.5 L17.5 10Z M14.5 14.3 L16 15.8 L17.5 14.3Z" fill="#666"/><path d="M1 10.5 L5.5 10.5 L6.8 12 L12 12 L12 19.5 L1 19.5Z" fill="#d8a828" stroke="#8a6a10" stroke-width="0.5"/><path d="M3.2 13.8 L16 13.8 L12.5 19.8 L0.5 19.8Z" fill="#f8d868" stroke="#a07a10" stroke-width="0.6"/></svg>
<svg style="position:absolute;left:337px;top:115px" width="21" height="20" viewBox="0 0 21 20"><rect x="0.5" y="0.5" width="20" height="19" fill="#e6ebf3" stroke="#aeb8c8" stroke-width="1"/><rect x="1.5" y="1.5" width="18" height="4" fill="#f6f8fc"/><rect x="2" y="7" width="9.5" height="11" fill="#f4f6fa" stroke="#c4ccd8" stroke-width="0.6"/><rect x="13" y="6.5" width="6" height="5" fill="#f0f2f6" stroke="#b4bccb" stroke-width="0.6"/><rect x="13" y="12.5" width="6" height="5.5" fill="#f0f2f6" stroke="#b4bccb" stroke-width="0.6"/><path d="M14.5 10 L16 8.5 L17.5 10Z M14.5 14.3 L16 15.8 L17.5 14.3Z" fill="#666"/><rect x="0.8" y="6.8" width="11.5" height="12.8" fill="#4a4ac8" stroke="#2a2a8a" stroke-width="0.6"/><rect x="3" y="7.5" width="7" height="5" fill="#f4f4ff"/><rect x="4.5" y="15.5" width="4" height="3.5" fill="#222"/><rect x="5.5" y="16" width="1.2" height="2.5" fill="#ddd"/></svg>
<svg style="position:absolute;left:369px;top:115px" width="14" height="20" viewBox="0 0 14 20"><defs><linearGradient id="pg" x1="0" y1="0" x2="1" y2="1"><stop offset="0" stop-color="#60f060"/><stop offset="1" stop-color="#08b808"/></linearGradient></defs><path d="M1 1 L12.5 9.5 L1 19Z" fill="url(#pg)" stroke="#0a7a0a" stroke-width="1"/></svg>
<div style="left:360px;top:110px;width:28px;height:31px;box-sizing:border-box;border:3px solid #ff8000;border-radius:3px;"></div>
<svg style="position:absolute;left:395px;top:115px" width="21" height="20" viewBox="0 0 21 20"><rect x="0.5" y="0.5" width="20" height="19" fill="#e6ebf3" stroke="#aeb8c8" stroke-width="1"/><rect x="1.5" y="1.5" width="18" height="4" fill="#f6f8fc"/><rect x="2" y="7" width="9.5" height="11" fill="#f4f6fa" stroke="#c4ccd8" stroke-width="0.6"/><rect x="13" y="6.5" width="6" height="5" fill="#f0f2f6" stroke="#b4bccb" stroke-width="0.6"/><rect x="13" y="12.5" width="6" height="5.5" fill="#f0f2f6" stroke="#b4bccb" stroke-width="0.6"/><path d="M14.5 10 L16 8.5 L17.5 10Z M14.5 14.3 L16 15.8 L17.5 14.3Z" fill="#666"/><rect x="0.8" y="8" width="11" height="11.6" fill="#5050c8" stroke="#2a2a8a" stroke-width="0.6"/><rect x="3" y="9" width="6.5" height="4.5" fill="#f4f4ff"/><rect x="4.5" y="15.8" width="4" height="3.5" fill="#222"/><path d="M12.5 19 L14 19 M15.8 19 L17.3 19 M19 19 L20.5 19" stroke="#111" stroke-width="2"/></svg>
<svg style="position:absolute;left:424px;top:115px" width="21" height="20" viewBox="0 0 21 20"><rect x="0.5" y="0.5" width="20" height="19" fill="#e6ebf3" stroke="#aeb8c8" stroke-width="1"/><rect x="1.5" y="1.5" width="18" height="4" fill="#f6f8fc"/><rect x="2" y="7" width="9.5" height="11" fill="#f4f6fa" stroke="#c4ccd8" stroke-width="0.6"/><rect x="13" y="6.5" width="6" height="5" fill="#f0f2f6" stroke="#b4bccb" stroke-width="0.6"/><rect x="13" y="12.5" width="6" height="5.5" fill="#f0f2f6" stroke="#b4bccb" stroke-width="0.6"/><path d="M14.5 10 L16 8.5 L17.5 10Z M14.5 14.3 L16 15.8 L17.5 14.3Z" fill="#666"/><path d="M1 7 L9.5 13 L1 19.5Z" fill="#10d010" stroke="#0a7a0a" stroke-width="0.8"/></svg>
<svg style="position:absolute;left:458px;top:111px" width="60" height="28" viewBox="0 0 60 28"><g stroke="#555" stroke-width="1.1"><path d="M4.5 4.5 L6.5 6.5 M23 4.5 L21 6.5 M4.5 22.5 L6.5 20.5 M23 22.5 L21 20.5 M4 13.5 L6 13.5 M23 13.5 L25 13.5 M13.8 4 L13.8 6"/></g><rect x="7.5" y="7.2" width="13" height="12.8" rx="1.5" fill="#7aa8e4" stroke="#505050" stroke-width="1.3"/><rect x="8.3" y="8" width="11.4" height="5.8" fill="#faf0a0"/><path d="M10.5 9.8 L16.5 9.8" stroke="#5aa0d8" stroke-width="1"/><path d="M10.5 12 L16.5 12" stroke="#8a8a8a" stroke-width="0.8"/><path d="M34 5.5 L35 4.5 L37.5 4.5 L38.5 5.8 L43.8 5.8 L43.8 13.5 L34 13.5Z" fill="#f6ee60" stroke="#555" stroke-width="1.1"/><path d="M35.3 17 L35.3 21.3 L39 21.3" stroke="#666" stroke-width="1.4" fill="none"/><path d="M38 18.8 L41.5 21.3 L38 23.8Z" fill="#666"/><g fill="#6aa0e0"><path d="M47.5 13.5 L47.5 18.5 L43 18.5Z"/><path d="M48.8 13.5 L48.8 18.5 L53 18.5Z"/><path d="M47.5 24 L47.5 19.8 L43 19.8Z"/><path d="M48.8 24 L48.8 19.8 L53 19.8Z"/></g></svg>
<svg style="position:absolute;left:526px;top:111px" width="136" height="28" viewBox="0 0 136 28"><rect x="5.5" y="6" width="15" height="15.5" fill="#dfe8f6" stroke="#8aa0c8" stroke-width="1"/><rect x="6" y="6.5" width="14" height="2.5" fill="#4a7ad8"/><path d="M8 11.5 L12 11.5 M8 14 L11 14 M8 16.5 L11 16.5" stroke="#9ab0d0" stroke-width="0.9"/><circle cx="14.3" cy="15" r="3.6" fill="#f4f8ff" stroke="#7a8aa8" stroke-width="1.3"/><path d="M16.8 17.6 L21 21.5" stroke="#283a78" stroke-width="2.2"/><defs><linearGradient id="tb" x1="0" y1="0" x2="0" y2="1"><stop offset="0" stop-color="#8ab4f4"/><stop offset="1" stop-color="#2a5ac8"/></linearGradient></defs><path d="M43 6 L43 11.5 L63 11.5 L63 6 M47.5 9 L47.5 11.5 M52.5 9 L52.5 11.5 M57.5 9 L57.5 11.5" stroke="#3a5aa8" stroke-width="1.2" fill="none"/><rect x="42.5" y="12.5" width="21" height="5" fill="url(#tb)"/><rect x="42.5" y="17.5" width="21" height="5.5" fill="#3a62c0"/><g fill="#e8eefc"><rect x="44" y="18.5" width="3.5" height="3"/><rect x="49" y="18.5" width="3.5" height="3"/><rect x="54" y="18.5" width="3.5" height="3"/><rect x="59" y="18.5" width="3.5" height="3"/></g><path d="M71.5 5.5 L71.5 10.5 M71.5 8 L76 8 M86 8 L90.5 8 M90.5 5.5 L90.5 10.5 M78 11 L84 5" stroke="#3a5aa8" stroke-width="1.3" fill="none"/><circle cx="78.5" cy="5.8" r="1.1" fill="#3a5aa8"/><circle cx="83.5" cy="10.3" r="1.1" fill="#3a5aa8"/><rect x="71" y="12.5" width="21" height="5" fill="url(#tb)"/><rect x="71" y="17.5" width="21" height="5.5" fill="#3a62c0"/><g fill="#e8eefc"><rect x="72.5" y="18.5" width="3.5" height="3"/><rect x="77.5" y="18.5" width="3.5" height="3"/><rect x="82.5" y="18.5" width="3.5" height="3"/><rect x="87.5" y="18.5" width="3.5" height="3"/></g><path d="M114 6 Q114 4 116.5 4 L127.5 4 Q130 4 130 6 L130 17.5 Q130 20 127.5 20 L116 20Z" fill="#777" stroke="#444" stroke-width="0.9"/><rect x="110" y="8" width="16" height="15.8" rx="2.5" fill="#5a5a5a" stroke="#333" stroke-width="0.9"/><rect x="112.3" y="10.8" width="11.4" height="5.8" fill="#f4e48a"/><path d="M114 12.5 L119 12.5" stroke="#4a8ae0" stroke-width="1"/><path d="M114 14.6 L121 14.6" stroke="#999" stroke-width="0.8"/><rect x="112.3" y="16.6" width="11.4" height="4.5" fill="#7aaae8"/></svg>
<svg style="position:absolute;left:672px;top:110px" width="28" height="28" viewBox="0 0 28 28"><g fill="#3a5cb8"><rect x="8" y="6.5" width="4" height="3"/><rect x="7" y="9" width="6" height="4.5"/><rect x="4" y="13" width="8" height="10" rx="1"/><rect x="15" y="6.5" width="4.5" height="3"/><rect x="14" y="9" width="6.5" height="4.5"/><rect x="15" y="13" width="8" height="10" rx="1"/></g><rect x="12" y="12" width="3" height="4" fill="#1a2a80"/><g fill="#e8f0ff"><rect x="6" y="16.5" width="1.6" height="5"/><rect x="17.5" y="16.5" width="1.8" height="5"/><rect x="7.5" y="13.5" width="3" height="1.4"/><rect x="16" y="13.5" width="3" height="1.4"/><rect x="9" y="7.5" width="1.5" height="1"/><rect x="16.5" y="7.5" width="1.5" height="1"/></g></svg>
<svg style="position:absolute;left:700px;top:110px" width="28" height="28" viewBox="0 0 28 28"><g fill="#3a5cb8"><rect x="7" y="5" width="3.5" height="3.5"/><rect x="13" y="5" width="3.5" height="3.5"/><rect x="6" y="8.5" width="5" height="4.5"/><rect x="12" y="8.5" width="5" height="4.5"/><rect x="5" y="13" width="6" height="4.6" rx="0.8"/><rect x="12" y="13" width="6" height="4.6" rx="0.8"/></g><rect x="10.5" y="9" width="2" height="4.5" fill="#1a2a80"/><g fill="#e8f0ff"><rect x="7" y="14.5" width="2.5" height="1.6"/><rect x="13.5" y="14.5" width="2.5" height="1.6"/><rect x="7.5" y="10" width="1.2" height="1.5"/><rect x="13.5" y="10" width="1.2" height="1.5"/></g><g fill="#4a7ad8"><rect x="8.5" y="21.6" width="1.2" height="1.2"/><rect x="10.5" y="21.6" width="1.2" height="1.2"/><rect x="13" y="21.3" width="6" height="1.8"/><path d="M18.5 19.5 L23.5 22.2 L18.5 24.8Z"/></g></svg>
<div style="left:0px;top:145px;width:1px;height:764px;background:#d4d4d4;"></div>
<div style="left:6px;top:150px;width:1309px;height:249px;background:#f0f0f0;"></div>
<div style="left:6px;top:150px;width:1309px;height:2px;background:#6e6e6e;"></div>
<div style="left:6px;top:150px;width:2px;height:249px;background:#6e6e6e;"></div>
<div style="left:6px;top:399px;width:1309px;height:1px;background:#e2e2e2;"></div>
<div style="left:6px;top:400px;width:1309px;height:5px;background:#f8f8f8;"></div>
<div style="left:177px;top:153px;width:170px;height:26px;background:#fff;box-sizing:border-box;border:1px solid #7a7a7a;"></div>
<div style="left:349px;top:155px;width:21px;height:21px;background:#e1e1e1;box-sizing:border-box;border:1px solid #adadad;"></div>
<div style="left:352px;top:170px;width:3px;height:2px;background:#222;border-radius:1px;"></div>
<div style="left:357px;top:170px;width:3px;height:2px;background:#222;border-radius:1px;"></div>
<div style="left:362px;top:170px;width:3px;height:2px;background:#222;border-radius:1px;"></div>
<div style="left:376px;top:153px;width:706px;height:26px;background:#fff;box-sizing:border-box;border:1px solid #7a7a7a;"></div>
<div class="t" style="left:335.92px;top:157.75px;font-size:14px;color:#000;transform:scaleX(0.9297);transform-origin:right top;">1</div>
<div class="t" style="left:379.30px;top:157.75px;font-size:14px;color:#000;transform:scaleX(0.9523);transform-origin:left top;">Empresa Treinamento (13)</div>
<div style="left:177px;top:185px;width:169px;height:23px;background:#dfdfdf;"></div>
<div class="t" style="left:181.90px;top:188.85px;font-size:14px;color:#000;transform:scaleX(0.9114);transform-origin:left top;">Normal</div>
<svg style="position:absolute;left:330px;top:193px" width="12" height="7" viewBox="0 0 12 7"><path d="M0.5 0.8 L5.5 5.5 L10.5 0.8" stroke="#5c5c5c" stroke-width="1" fill="none"/></svg>
<div style="left:177px;top:213px;width:170px;height:26px;background:#fff;box-sizing:border-box;border:1px solid #7a7a7a;"></div>
<div style="left:349px;top:215px;width:21px;height:21px;background:#e1e1e1;box-sizing:border-box;border:1px solid #adadad;"></div>
<div style="left:352px;top:230px;width:3px;height:2px;background:#222;border-radius:1px;"></div>
<div style="left:357px;top:230px;width:3px;height:2px;background:#222;border-radius:1px;"></div>
<div style="left:362px;top:230px;width:3px;height:2px;background:#222;border-radius:1px;"></div>
<div style="left:376px;top:213px;width:706px;height:26px;background:#fff;box-sizing:border-box;border:1px solid #7a7a7a;"></div>
<div class="t" style="left:335.92px;top:217.95px;font-size:14px;color:#000;transform:scaleX(0.9297);transform-origin:right top;">1</div>
<div class="t" style="left:379.50px;top:217.95px;font-size:14px;color:#000;transform:scaleX(0.9297);transform-origin:left top;">Auxilio Doença</div>
<div style="left:177px;top:243px;width:170px;height:26px;background:#fff;box-sizing:border-box;border:1px solid #7a7a7a;"></div>
<div style="left:349px;top:245px;width:21px;height:21px;background:#e1e1e1;box-sizing:border-box;border:1px solid #adadad;"></div>
<div style="left:352px;top:260px;width:3px;height:2px;background:#222;border-radius:1px;"></div>
<div style="left:357px;top:260px;width:3px;height:2px;background:#222;border-radius:1px;"></div>
<div style="left:362px;top:260px;width:3px;height:2px;background:#222;border-radius:1px;"></div>
<div style="left:376px;top:243px;width:706px;height:26px;background:#fff;box-sizing:border-box;border:1px solid #7a7a7a;"></div>
<div class="t" style="left:328.14px;top:248.45px;font-size:14px;color:#000;transform:scaleX(0.9297);transform-origin:right top;">12</div>
<div class="t" style="left:380.20px;top:248.45px;font-size:14px;color:#000;transform:scaleX(0.9686);transform-origin:left top;">11/2025 - 20 - 13o Salário Adiantamento</div>
<div style="left:177px;top:273px;width:170px;height:26px;background:#fff;box-sizing:border-box;border:1px solid #d9d9d9;"></div>
<div style="left:349px;top:275px;width:21px;height:21px;background:#cccccc;box-sizing:border-box;border:1px solid #c4c4c4;"></div>
<div style="left:352px;top:290px;width:3px;height:2px;background:#9a9a9a;border-radius:1px;"></div>
<div style="left:357px;top:290px;width:3px;height:2px;background:#9a9a9a;border-radius:1px;"></div>
<div style="left:362px;top:290px;width:3px;height:2px;background:#9a9a9a;border-radius:1px;"></div>
<div style="left:376px;top:273px;width:141px;height:26px;background:#fff;box-sizing:border-box;border:1px solid #d9d9d9;"></div>
<div style="left:177px;top:303px;width:170px;height:26px;background:#fff;box-sizing:border-box;border:1px solid #d9d9d9;"></div>
<div style="left:349px;top:305px;width:21px;height:21px;background:#cccccc;box-sizing:border-box;border:1px solid #c4c4c4;"></div>
<div style="left:352px;top:320px;width:3px;height:2px;background:#9a9a9a;border-radius:1px;"></div>
<div style="left:357px;top:320px;width:3px;height:2px;background:#9a9a9a;border-radius:1px;"></div>
<div style="left:362px;top:320px;width:3px;height:2px;background:#9a9a9a;border-radius:1px;"></div>
<div style="left:177px;top:333px;width:680px;height:26px;background:#fff;box-sizing:border-box;border:1px solid #d9d9d9;"></div>
<div style="left:859px;top:335px;width:21px;height:21px;background:#cccccc;box-sizing:border-box;border:1px solid #c4c4c4;"></div>
<div style="left:862px;top:350px;width:3px;height:2px;background:#9a9a9a;border-radius:1px;"></div>
<div style="left:867px;top:350px;width:3px;height:2px;background:#9a9a9a;border-radius:1px;"></div>
<div style="left:872px;top:350px;width:3px;height:2px;background:#9a9a9a;border-radius:1px;"></div>
<div style="left:177px;top:363px;width:340px;height:26px;background:#fff;box-sizing:border-box;border:1px solid #7a7a7a;"></div>
<div style="left:519px;top:365px;width:21px;height:21px;background:#e1e1e1;box-sizing:border-box;border:1px solid #adadad;"></div>
<div style="left:522px;top:380px;width:3px;height:2px;background:#222;border-radius:1px;"></div>
<div style="left:527px;top:380px;width:3px;height:2px;background:#222;border-radius:1px;"></div>
<div style="left:532px;top:380px;width:3px;height:2px;background:#222;border-radius:1px;"></div>
<div style="left:546px;top:363px;width:536px;height:26px;background:#fff;box-sizing:border-box;border:1px solid #7a7a7a;"></div>
<div class="t" style="left:112.66px;top:159.25px;font-size:14px;font-weight:bold;color:#000;transform:scaleX(1.0264);transform-origin:right top;">Empresa</div>
<div class="t" style="left:98.97px;top:188.95px;font-size:14px;font-weight:bold;color:#000;transform:scaleX(1.0326);transform-origin:right top;">Tipo Média</div>
<div class="t" style="left:113.50px;top:218.65px;font-size:14px;font-weight:bold;color:#000;transform:scaleX(1.0532);transform-origin:right top;">Contrato</div>
<div class="t" style="left:45.03px;top:248.35px;font-size:14px;font-weight:bold;color:#000;transform:scaleX(1.0097);transform-origin:right top;">Período de Cálculo</div>
<div class="t" style="left:102.67px;top:279.45px;font-size:14px;color:#a4a4a4;transform:scaleX(0.9533);transform-origin:right top;">Data Inicial</div>
<div class="t" style="left:33.45px;top:309.25px;font-size:14px;color:#a4a4a4;transform:scaleX(0.9454);transform-origin:right top;">Data Inicial das Férias</div>
<div class="t" style="left:24.85px;top:339.65px;font-size:14px;color:#a4a4a4;transform:scaleX(0.9249);transform-origin:right top;">Sequência da Rescisão</div>
<div class="t" style="left:128.32px;top:369.15px;font-size:14px;color:#000;transform:scaleX(0.9776);transform-origin:right top;">Evento</div>
<div class="t" style="left:1089.40px;top:220.55px;font-size:14px;font-weight:bold;color:#138a13;transform:scaleX(1.1476);transform-origin:left top;">[Adm:05/02/2024]</div>
<div style="left:82px;top:181px;width:268px;height:31px;box-sizing:border-box;border:4px solid #ff8000;border-radius:3px;"></div>
<div style="left:29px;top:242px;width:1055px;height:31px;box-sizing:border-box;border:4px solid #ff8000;border-radius:3px;"></div>
<div style="left:5px;top:405px;width:1310px;height:503px;background:#fff;"></div>
<div style="left:5px;top:405px;width:1310px;height:1px;background:#a0a0a0;"></div>
<div style="left:5px;top:405px;width:1px;height:503px;background:#a0a0a0;"></div>
<div style="left:5px;top:907px;width:1310px;height:1px;background:#c8c8c8;"></div>
<div style="left:21px;top:406px;width:1px;height:501px;background:#e3e3e3;"></div>
<div style="left:117px;top:406px;width:1px;height:25px;background:#e3e3e3;"></div>
<div style="left:687px;top:406px;width:1px;height:25px;background:#e3e3e3;"></div>
<div style="left:828px;top:406px;width:1px;height:25px;background:#e3e3e3;"></div>
<div style="left:946px;top:406px;width:1px;height:25px;background:#e3e3e3;"></div>
<div style="left:1072px;top:406px;width:1px;height:25px;background:#e3e3e3;"></div>
<div style="left:6px;top:430px;width:1067px;height:1px;background:#e3e3e3;"></div>
<div class="t" style="left:26.30px;top:411.95px;font-size:14px;color:#000;transform:scaleX(0.9753);transform-origin:left top;">Evento</div>
<div class="t" style="left:122.60px;top:411.95px;font-size:14px;color:#000;transform:scaleX(0.9209);transform-origin:left top;">Descrição</div>
<div class="t" style="left:691.80px;top:411.95px;font-size:14px;color:#000;transform:scaleX(0.9289);transform-origin:left top;">Valor</div>
<div class="t" style="left:833.00px;top:411.95px;font-size:14px;color:#000;transform:scaleX(0.9292);transform-origin:left top;">Total</div>
<div class="t" style="left:951.00px;top:411.95px;font-size:14px;color:#000;transform:scaleX(0.9293);transform-origin:left top;">Total Corrigido</div>
<div style="left:45px;top:431px;width:1027px;height:24px;background:#0078d7;"></div>
<div style="left:117px;top:431px;width:2px;height:23px;background:#a4cdf0;"></div>
<div style="left:687px;top:431px;width:2px;height:23px;background:#a4cdf0;"></div>
<div style="left:828px;top:431px;width:2px;height:23px;background:#a4cdf0;"></div>
<div style="left:946px;top:431px;width:2px;height:23px;background:#a4cdf0;"></div>
<svg style="position:absolute;left:11px;top:436.6px" width="7" height="11" viewBox="0 0 7 11"><path d="M0 0 L6.5 5.5 L0 11Z" fill="#4c4c4c"/></svg>
<svg style="position:absolute;left:29px;top:437.8px" width="11" height="11" viewBox="0 0 11 11"><defs><linearGradient id="mg" x1="0" y1="0" x2="0" y2="1"><stop offset="0" stop-color="#ffffff"/><stop offset="1" stop-color="#e4e4e4"/></linearGradient></defs><rect x="0.5" y="0.5" width="10" height="10" rx="1.5" fill="url(#mg)" stroke="#8c8c8c" stroke-width="1"/><rect x="2.5" y="4.8" width="6" height="1.5" fill="#4a68b0"/></svg>
<div class="t" style="left:89.76px;top:435.95px;font-size:14px;color:#fff;transform:scaleX(0.9297);transform-origin:right top;">251</div>
<div class="t" style="left:122.60px;top:435.95px;font-size:14px;color:#fff;transform:scaleX(0.9306);transform-origin:left top;">Media Comissoes/DSR 13o Sal.Adiantamento</div>
<div class="t" style="left:788.48px;top:435.95px;font-size:14px;color:#fff;transform:scaleX(0.9295);transform-origin:right top;">48,76</div>
<div class="t" style="left:900.23px;top:435.95px;font-size:14px;color:#fff;transform:scaleX(0.9293);transform-origin:right top;">117,03</div>
<div class="t" style="left:1026.73px;top:435.95px;font-size:14px;color:#fff;transform:scaleX(0.9293);transform-origin:right top;">117,03</div>
<div style="left:6px;top:891px;width:39px;height:1px;background:#e3e3e3;"></div>
<div style="left:117px;top:892px;width:1px;height:15px;background:#f7f7f7;"></div>
<div style="left:687px;top:892px;width:1px;height:15px;background:#f7f7f7;"></div>
<div style="left:828px;top:892px;width:1px;height:15px;background:#f7f7f7;"></div>
<div style="left:946px;top:892px;width:1px;height:15px;background:#f7f7f7;"></div>
<div style="left:1073px;top:892px;width:1px;height:15px;background:#f7f7f7;"></div>
<div style="left:45px;top:455px;width:1027px;height:436px;background:#fff;"></div>
<div style="left:45px;top:455px;width:1px;height:436px;background:#6e6e6e;"></div>
<div style="left:1071px;top:455px;width:1px;height:436px;background:#6e6e6e;"></div>
<div style="left:45px;top:890px;width:1027px;height:1px;background:#6e6e6e;"></div>
<div style="left:69px;top:455px;width:1px;height:435px;background:#e3e3e3;"></div>
<div style="left:231px;top:455px;width:1px;height:23px;background:#e3e3e3;"></div>
<div style="left:375px;top:455px;width:1px;height:23px;background:#e3e3e3;"></div>
<div style="left:519px;top:455px;width:1px;height:23px;background:#e3e3e3;"></div>
<div style="left:671px;top:455px;width:1px;height:23px;background:#e3e3e3;"></div>
<div style="left:754px;top:455px;width:1px;height:23px;background:#e3e3e3;"></div>
<div style="left:836px;top:455px;width:1px;height:23px;background:#e3e3e3;"></div>
<div style="left:46px;top:477px;width:1025px;height:1px;background:#e3e3e3;"></div>
<div class="t" style="left:73.70px;top:458.95px;font-size:14px;color:#000;transform:scaleX(0.9292);transform-origin:left top;">DataInicial</div>
<div class="t" style="left:236.90px;top:458.95px;font-size:14px;color:#000;transform:scaleX(0.9292);transform-origin:left top;">CompetIni</div>
<div class="t" style="left:379.80px;top:458.95px;font-size:14px;color:#000;transform:scaleX(0.9291);transform-origin:left top;">CompetFim</div>
<div class="t" style="left:524.50px;top:458.95px;font-size:14px;color:#000;transform:scaleX(0.9294);transform-origin:left top;">TipoMedia</div>
<div class="t" style="left:676.50px;top:458.95px;font-size:14px;color:#000;transform:scaleX(0.9291);transform-origin:left top;">Meses</div>
<div class="t" style="left:759.00px;top:458.95px;font-size:14px;color:#000;transform:scaleX(0.9294);transform-origin:left top;">Maiores</div>
<div class="t" style="left:841.00px;top:458.95px;font-size:14px;color:#000;transform:scaleX(0.9291);transform-origin:left top;">Divisor</div>
<div style="left:93px;top:478px;width:977px;height:22px;background:#0078d7;"></div>
<div style="left:231px;top:478px;width:2px;height:22px;background:#a4cdf0;"></div>
<div style="left:375px;top:478px;width:2px;height:22px;background:#a4cdf0;"></div>
<div style="left:519px;top:478px;width:2px;height:22px;background:#a4cdf0;"></div>
<div style="left:671px;top:478px;width:2px;height:22px;background:#a4cdf0;"></div>
<div style="left:754px;top:478px;width:2px;height:22px;background:#a4cdf0;"></div>
<div style="left:836px;top:478px;width:2px;height:22px;background:#a4cdf0;"></div>
<div class="t" style="left:49.30px;top:482.84px;font-size:12px;font-weight:bold;color:#2a2a2a;transform:scaleX(0.8244);transform-origin:left top;">1</div>
<svg style="position:absolute;left:58.5px;top:483px" width="7" height="11" viewBox="0 0 7 11"><path d="M0 0 L6.5 5.5 L0 11Z" fill="#4c4c4c"/></svg>
<svg style="position:absolute;left:76.5px;top:483px" width="11" height="11" viewBox="0 0 11 11"><defs><linearGradient id="mg" x1="0" y1="0" x2="0" y2="1"><stop offset="0" stop-color="#ffffff"/><stop offset="1" stop-color="#e4e4e4"/></linearGradient></defs><rect x="0.5" y="0.5" width="10" height="10" rx="1.5" fill="url(#mg)" stroke="#8c8c8c" stroke-width="1"/><rect x="2.5" y="4.8" width="6" height="1.5" fill="#4a68b0"/></svg>
<div class="t" style="left:96.50px;top:481.95px;font-size:14px;color:#fff;transform:scaleX(0.9293);transform-origin:left top;">01/11/2025</div>
<div class="t" style="left:236.50px;top:481.95px;font-size:14px;color:#fff;transform:scaleX(0.9295);transform-origin:left top;">01/01/2025</div>
<div class="t" style="left:379.50px;top:481.95px;font-size:14px;color:#fff;transform:scaleX(0.9293);transform-origin:left top;">01/11/2025</div>
<div class="t" style="left:523.70px;top:481.95px;font-size:14px;color:#fff;transform:scaleX(0.9290);transform-origin:left top;">Período Aquisitivo</div>
<div class="t" style="left:733.94px;top:481.95px;font-size:14px;color:#fff;transform:scaleX(0.9297);transform-origin:right top;">12</div>
<div class="t" style="left:816.44px;top:481.95px;font-size:14px;color:#fff;transform:scaleX(0.9297);transform-origin:right top;">10</div>
<div class="t" style="left:1050.44px;top:481.95px;font-size:14px;color:#fff;transform:scaleX(0.9297);transform-origin:right top;">10</div>
<div style="left:46px;top:836px;width:47px;height:1px;background:#e3e3e3;"></div>
<div style="left:231px;top:837px;width:1px;height:53px;background:#f0f0f0;"></div>
<div style="left:375px;top:837px;width:1px;height:53px;background:#f0f0f0;"></div>
<div style="left:519px;top:837px;width:1px;height:53px;background:#f0f0f0;"></div>
<div style="left:671px;top:837px;width:1px;height:53px;background:#f0f0f0;"></div>
<div style="left:754px;top:837px;width:1px;height:53px;background:#f0f0f0;"></div>
<div style="left:836px;top:837px;width:1px;height:53px;background:#f0f0f0;"></div>
<div style="left:93px;top:500px;width:977px;height:336px;background:#fff;"></div>
<div style="left:93px;top:500px;width:1px;height:336px;background:#6e6e6e;"></div>
<div style="left:1069px;top:500px;width:1px;height:336px;background:#6e6e6e;"></div>
<div style="left:93px;top:835px;width:977px;height:1px;background:#6e6e6e;"></div>
<div style="left:116px;top:501px;width:1px;height:334px;background:#e3e3e3;"></div>
<div style="left:306px;top:501px;width:1px;height:23px;background:#e3e3e3;"></div>
<div style="left:497px;top:501px;width:1px;height:23px;background:#e3e3e3;"></div>
<div style="left:688px;top:501px;width:1px;height:23px;background:#e3e3e3;"></div>
<div style="left:878px;top:501px;width:1px;height:23px;background:#e3e3e3;"></div>
<div style="left:94px;top:523px;width:954px;height:1px;background:#e3e3e3;"></div>
<div class="t" style="left:121.40px;top:504.75px;font-size:14px;color:#000;transform:scaleX(0.9290);transform-origin:left top;">Evento</div>
<div class="t" style="left:312.00px;top:504.75px;font-size:14px;color:#000;transform:scaleX(0.9290);transform-origin:left top;">DescrEvento</div>
<div class="t" style="left:501.80px;top:504.75px;font-size:14px;color:#000;transform:scaleX(0.9293);transform-origin:left top;">Utilizado no Cálculo</div>
<div class="t" style="left:693.00px;top:504.75px;font-size:14px;color:#000;transform:scaleX(0.9290);transform-origin:left top;">Tipo Aula</div>
<div class="t" style="left:883.00px;top:504.75px;font-size:14px;color:#000;transform:scaleX(0.9290);transform-origin:left top;">Descrição Tipo Aula</div>
<div style="left:140px;top:524px;width:908px;height:23px;background:#0078d7;"></div>
<div style="left:306px;top:524px;width:2px;height:22px;background:#a4cdf0;"></div>
<div style="left:497px;top:524px;width:2px;height:22px;background:#a4cdf0;"></div>
<div style="left:688px;top:524px;width:2px;height:22px;background:#a4cdf0;"></div>
<div style="left:878px;top:524px;width:2px;height:22px;background:#a4cdf0;"></div>
<div class="t" style="left:96.80px;top:529.64px;font-size:12px;font-weight:bold;color:#2a2a2a;transform:scaleX(0.8244);transform-origin:left top;">1</div>
<svg style="position:absolute;left:106px;top:529px" width="7" height="11" viewBox="0 0 7 11"><path d="M0 0 L6.5 5.5 L0 11Z" fill="#4c4c4c"/></svg>
<svg style="position:absolute;left:124px;top:530px" width="11" height="11" viewBox="0 0 11 11"><defs><linearGradient id="mg" x1="0" y1="0" x2="0" y2="1"><stop offset="0" stop-color="#ffffff"/><stop offset="1" stop-color="#e4e4e4"/></linearGradient></defs><rect x="0.5" y="0.5" width="10" height="10" rx="1.5" fill="url(#mg)" stroke="#8c8c8c" stroke-width="1"/><rect x="2.5" y="4.8" width="6" height="1.5" fill="#4a68b0"/></svg>
<div class="t" style="left:285.74px;top:527.95px;font-size:14px;color:#fff;transform:scaleX(0.9297);transform-origin:right top;">90</div>
<div class="t" style="left:312.00px;top:527.95px;font-size:14px;color:#fff;transform:scaleX(0.9291);transform-origin:left top;">Comissões</div>
<div class="t" style="left:501.50px;top:527.95px;font-size:14px;color:#fff;transform:scaleX(0.9287);transform-origin:left top;">Sim</div>
<div class="t" style="left:865.72px;top:527.95px;font-size:14px;color:#fff;transform:scaleX(0.9297);transform-origin:right top;">0</div>
<div style="left:1048px;top:500px;width:21px;height:335px;background:#f0f0f0;"></div>
<div style="left:1049px;top:521px;width:18px;height:146px;background:#cdcdcd;"></div>
<svg style="position:absolute;left:1053px;top:508px" width="10" height="7" viewBox="0 0 10 7"><path d="M1 6 L5 2 L9 6" stroke="#606060" stroke-width="1.8" fill="none"/></svg>
<svg style="position:absolute;left:1053px;top:821px" width="10" height="7" viewBox="0 0 10 7"><path d="M1 1 L5 5 L9 1" stroke="#606060" stroke-width="1.8" fill="none"/></svg>
<div style="left:140px;top:547px;width:1px;height:288px;background:#6e6e6e;"></div>
<div style="left:1045px;top:547px;width:1px;height:288px;background:#6e6e6e;"></div>
<div style="left:140px;top:834px;width:906px;height:1px;background:#6e6e6e;"></div>
<div style="left:155px;top:548px;width:1px;height:286px;background:#e3e3e3;"></div>
<div style="left:291px;top:548px;width:1px;height:286px;background:#f2f2f2;"></div>
<div style="left:441px;top:548px;width:1px;height:286px;background:#f2f2f2;"></div>
<div style="left:591px;top:548px;width:1px;height:286px;background:#f2f2f2;"></div>
<div style="left:741px;top:548px;width:1px;height:286px;background:#f2f2f2;"></div>
<div style="left:891px;top:548px;width:1px;height:286px;background:#f2f2f2;"></div>
<div style="left:291px;top:548px;width:1px;height:21px;background:#e3e3e3;"></div>
<div style="left:441px;top:548px;width:1px;height:21px;background:#e3e3e3;"></div>
<div style="left:591px;top:548px;width:1px;height:21px;background:#e3e3e3;"></div>
<div style="left:741px;top:548px;width:1px;height:21px;background:#e3e3e3;"></div>
<div style="left:891px;top:548px;width:1px;height:21px;background:#e3e3e3;"></div>
<div class="t" style="left:160.50px;top:551.95px;font-size:14px;color:#000;transform:scaleX(0.9292);transform-origin:left top;">Compet</div>
<div class="t" style="left:296.50px;top:551.95px;font-size:14px;color:#000;transform:scaleX(0.9293);transform-origin:left top;">Utilizado</div>
<div class="t" style="left:447.00px;top:551.95px;font-size:14px;color:#000;transform:scaleX(0.9290);transform-origin:left top;">Per. Cálculo</div>
<div class="t" style="left:597.00px;top:551.95px;font-size:14px;color:#000;transform:scaleX(0.9289);transform-origin:left top;">Valor</div>
<div class="t" style="left:746.50px;top:551.95px;font-size:14px;color:#000;transform:scaleX(0.9292);transform-origin:left top;">Valor Corrigido</div>
<div class="t" style="left:896.00px;top:551.95px;font-size:14px;color:#000;transform:scaleX(0.9287);transform-origin:left top;">Cot.Acum.</div>
<div style="left:141px;top:569px;width:14px;height:1px;background:#e3e3e3;"></div>
<div style="left:155px;top:569px;width:890px;height:1px;background:#6e6e6e;"></div>
<div style="left:155px;top:570px;width:890px;height:22px;background:#fffde4;"></div>
<div style="left:291px;top:570px;width:1px;height:22px;background:#8c8c8c;"></div>
<div style="left:441px;top:570px;width:1px;height:22px;background:#8c8c8c;"></div>
<div style="left:591px;top:570px;width:1px;height:22px;background:#8c8c8c;"></div>
<div style="left:741px;top:570px;width:1px;height:22px;background:#8c8c8c;"></div>
<div style="left:891px;top:570px;width:1px;height:22px;background:#8c8c8c;"></div>
<div style="left:155px;top:591.5px;width:890px;height:1px;background:#8a8a8a;"></div>
<div style="left:141px;top:592px;width:14px;height:1px;background:#e3e3e3;"></div>
<div style="left:155px;top:592.5px;width:890px;height:22px;background:#fff;"></div>
<div style="left:291px;top:593px;width:1px;height:22px;background:#8c8c8c;"></div>
<div style="left:441px;top:593px;width:1px;height:22px;background:#8c8c8c;"></div>
<div style="left:591px;top:593px;width:1px;height:22px;background:#8c8c8c;"></div>
<div style="left:741px;top:593px;width:1px;height:22px;background:#8c8c8c;"></div>
<div style="left:891px;top:593px;width:1px;height:22px;background:#8c8c8c;"></div>
<div style="left:155px;top:592px;width:1px;height:23px;background:#6e6e6e;"></div>
<div style="left:155px;top:614px;width:890px;height:1px;background:#6e6e6e;"></div>
<div style="left:141px;top:614px;width:14px;height:1px;background:#e3e3e3;"></div>
<svg style="position:absolute;left:145px;top:575px" width="7" height="11" viewBox="0 0 7 11"><path d="M0 0 L6.5 5.5 L0 11Z" fill="#4c4c4c"/></svg>
<div class="t" style="left:238.12px;top:573.95px;font-size:14px;font-weight:bold;color:#1a8a1a;transform:scaleX(1.1784);transform-origin:right top;">01/2025</div>
<div class="t" style="left:412.11px;top:573.95px;font-size:14px;font-weight:bold;color:#1a8a1a;">Sim</div>
<div class="t" style="left:580.62px;top:573.95px;font-size:14px;font-weight:bold;color:#1a8a1a;transform:scaleX(1.0538);transform-origin:right top;">2</div>
<div class="t" style="left:695.50px;top:573.95px;font-size:14px;font-weight:bold;color:#1a8a1a;transform:scaleX(1.0865);transform-origin:right top;">500,00</div>
<div class="t" style="left:844.70px;top:573.95px;font-size:14px;font-weight:bold;color:#1a8a1a;transform:scaleX(1.0865);transform-origin:right top;">500,00</div>
<div class="t" style="left:237.82px;top:596.95px;font-size:14px;color:#1a8a1a;transform:scaleX(0.9925);transform-origin:right top;">07/2025</div>
<div class="t" style="left:413.69px;top:596.95px;font-size:14px;color:#1a8a1a;transform:scaleX(0.8213);transform-origin:right top;">Sim</div>
<div class="t" style="left:580.42px;top:596.95px;font-size:14px;color:#1a8a1a;transform:scaleX(0.9253);transform-origin:right top;">8</div>
<div class="t" style="left:695.50px;top:596.95px;font-size:14px;color:#1a8a1a;transform:scaleX(0.9814);transform-origin:right top;">500,00</div>
<div class="t" style="left:844.70px;top:596.95px;font-size:14px;color:#1a8a1a;transform:scaleX(0.9814);transform-origin:right top;">500,00</div>
<div style="left:156px;top:811px;width:889px;height:23px;background:#fff9ec;"></div>
<div style="left:141px;top:810px;width:904px;height:1px;background:#ebebeb;"></div>
<div style="left:291px;top:811px;width:1px;height:23px;background:#e6e6e6;"></div>
<div style="left:441px;top:811px;width:1px;height:23px;background:#e6e6e6;"></div>
<div style="left:591px;top:811px;width:1px;height:23px;background:#e6e6e6;"></div>
<div style="left:741px;top:811px;width:1px;height:23px;background:#e6e6e6;"></div>
<div style="left:891px;top:811px;width:1px;height:23px;background:#e6e6e6;"></div>
<div class="t" style="left:682.13px;top:815.95px;font-size:14px;color:#222;transform:scaleX(0.9804);transform-origin:right top;">1.000,00</div>
<div class="t" style="left:832.03px;top:815.95px;font-size:14px;color:#222;transform:scaleX(0.9804);transform-origin:right top;">1.000,00</div>
</body></html>
